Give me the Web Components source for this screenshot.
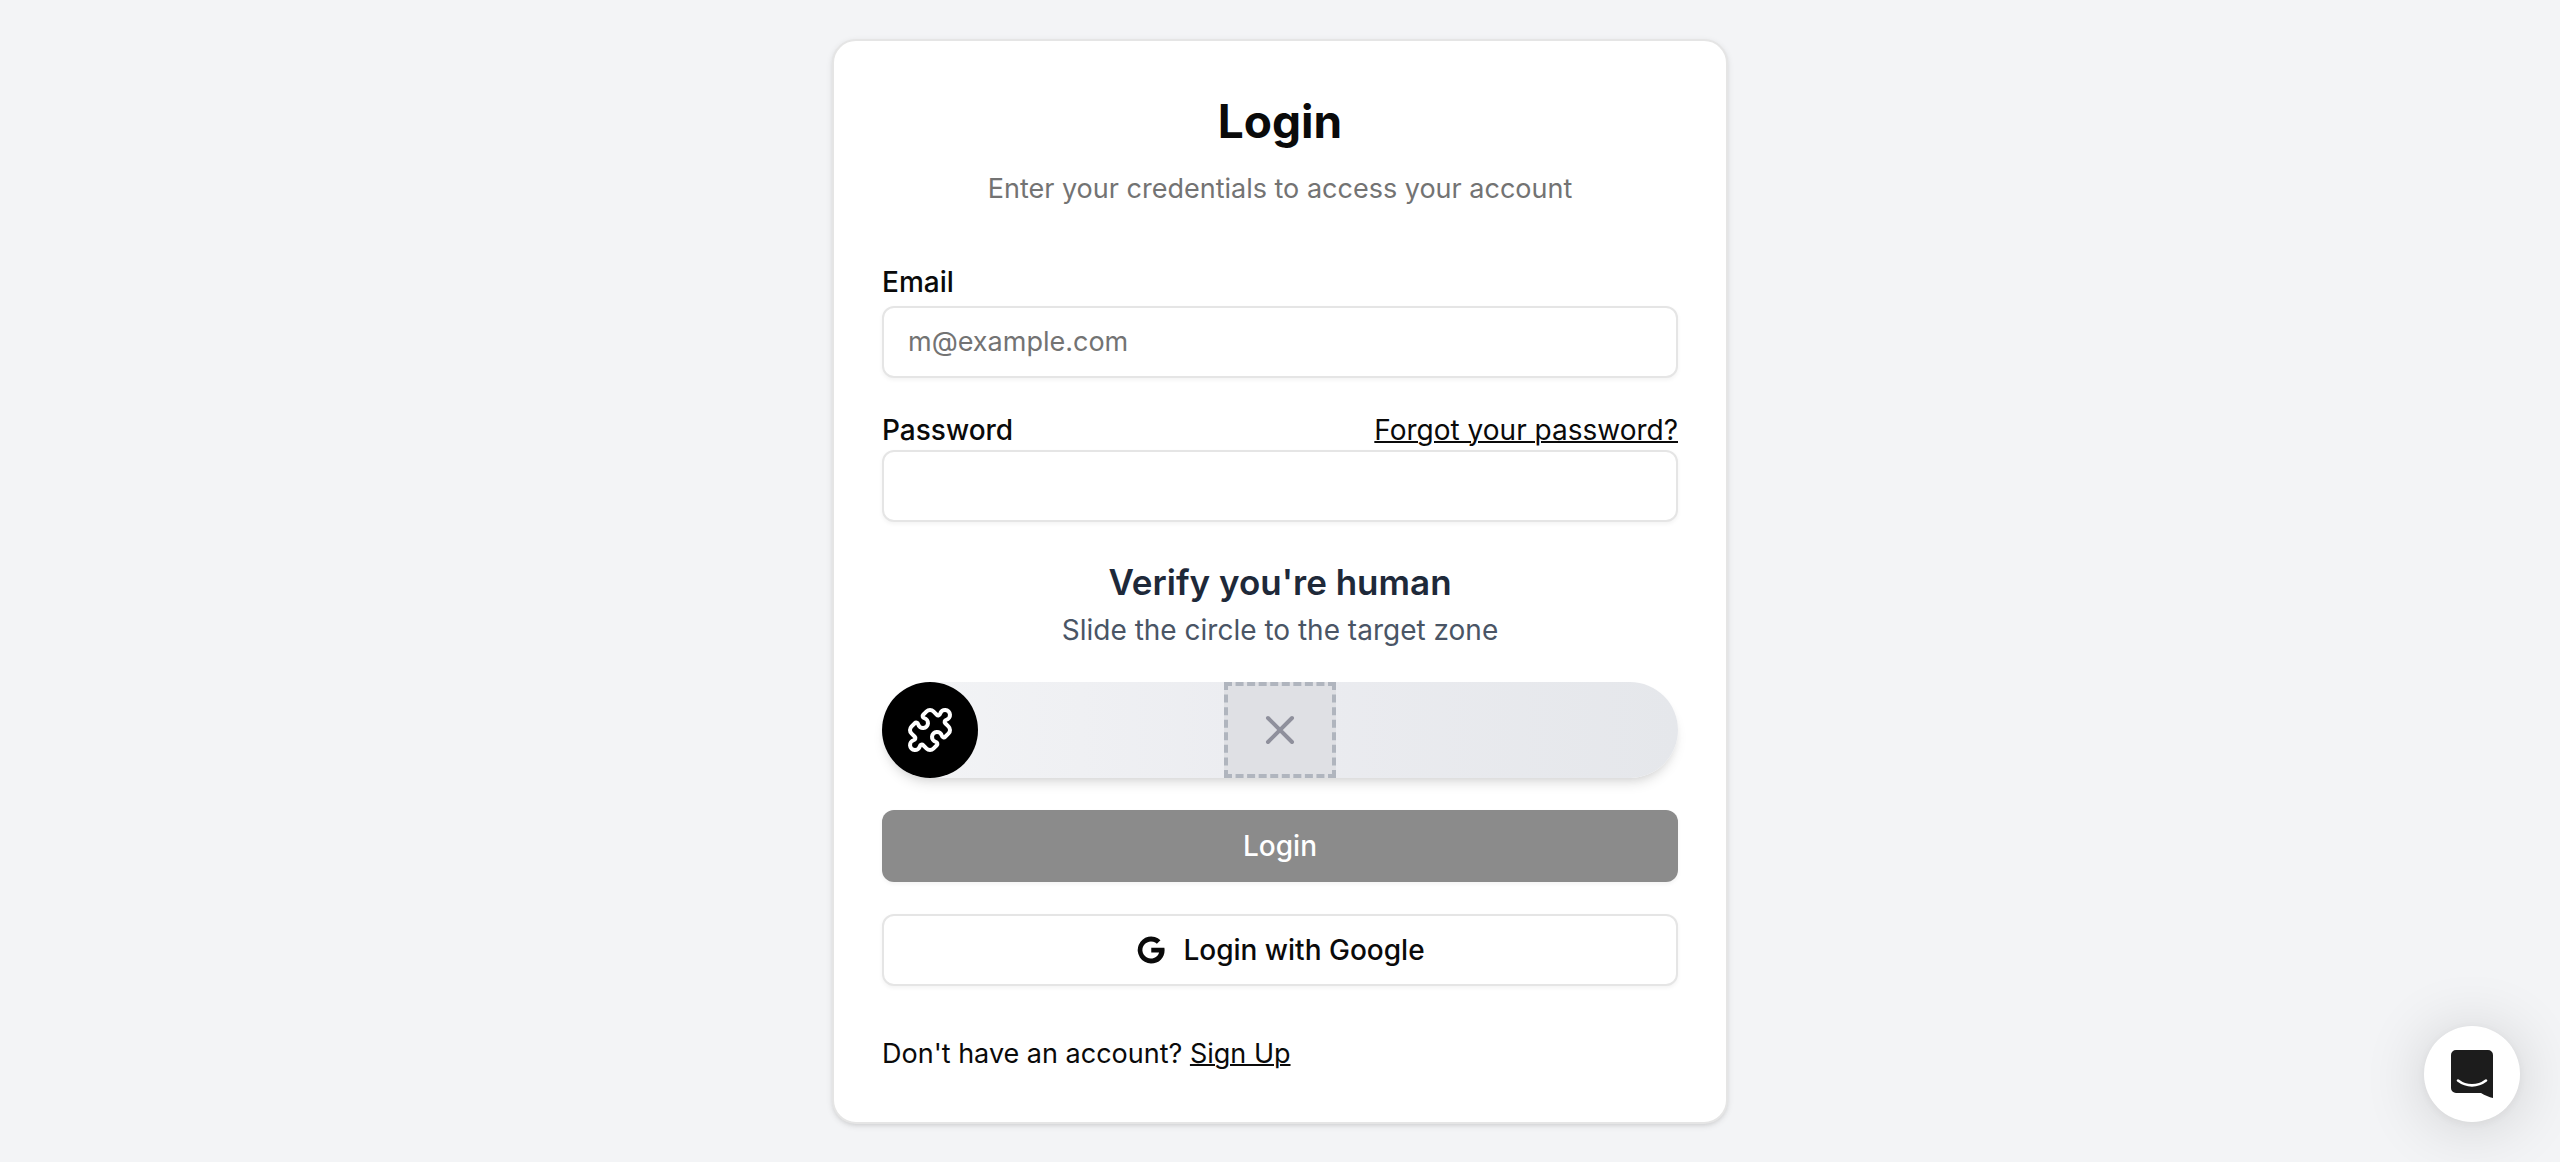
<!DOCTYPE html>
<html lang="en">
<head>
<meta charset="utf-8">
<title>Login</title>
<style>
  body { margin: 0; background: #f3f4f6; color: #0a0a0a; font-family: Inter, "Liberation Sans", sans-serif; font-size: 32px; line-height: 48px; }
</style>
</head>
<body>
<login-page></login-page>
<chat-launcher></chat-launcher>

<script>
const define = (name, html, setup) => customElements.define(name, class extends HTMLElement {
  constructor() {
    super();
    const t = document.createElement('template');
    t.innerHTML = `<style>*{box-sizing:border-box}</style>` + html;
    this.attachShadow({ mode: 'open' }).append(t.content.cloneNode(true));
    if (setup) setup(this, this.shadowRoot);
  }
});

define('text-field', `
<style>
  :host { display: block; }
  .row { display: flex; justify-content: space-between; }
  :host([compact]) .row { font-size: 28px; line-height: 40px; }
  label { font-size: 28px; font-weight: 500; }
  input { display: block; width: 100%; height: 72px; padding: 8px 24px; border: 2px solid #e5e5e5; border-radius: 12px;
    background: #fff; color: inherit; font: inherit; font-size: 27px; line-height: 40px; box-shadow: 0 2px 4px rgb(0 0 0 / .05); outline: none; }
  input:focus { border-color: #a3a3a3; }
  input::placeholder { color: #737373; opacity: 1; }
</style>
<div class="row"><div><label for="control"><slot></slot></label></div><slot name="hint"></slot></div>
<input id="control">`, (host, root) => {
  const input = root.querySelector('input');
  input.type = host.getAttribute('type') || 'text';
  input.placeholder = host.getAttribute('placeholder') || '';
});

define('text-link', `
<style>
  :host { display: inline; }
  a { color: inherit; text-decoration: underline; text-decoration-thickness: 2px; }
</style>
<a href="#"><slot></slot></a>`);

define('action-button', `
<style>
  :host { display: block; }
  button { display: flex; align-items: center; justify-content: center; gap: 16px; width: 100%; height: 72px; padding: 0 32px;
    border: 0; border-radius: 12px; background: #171717; color: #fafafa; font: inherit; font-size: 28px; font-weight: 500; line-height: 40px;
    box-shadow: 0 2px 4px rgb(0 0 0 / .1); }
  button:disabled { background: #8b8b8b; color: #fff; box-shadow: 0 2px 4px rgb(0 0 0 / .05); }
  :host([outline]) button { background: #fff; color: #0a0a0a; border: 2px solid #e5e5e5; box-shadow: 0 2px 4px rgb(0 0 0 / .05); }
</style>
<button type="button"><slot name="icon"></slot><slot></slot></button>`, (host, root) => {
  root.querySelector('button').disabled = host.hasAttribute('disabled');
});

define('slide-captcha', `
<style>
  :host { display: block; text-align: center; }
  h2 { margin: 0; font-size: 35px; line-height: 56px; font-weight: 600; color: #1e2939; }
  p { margin: 0 0 32px; font-size: 28px; line-height: 40px; color: #4a5565; }
  .track { display: grid; height: 96px; border-radius: 48px; background: linear-gradient(to right, #f3f4f6, #ebecf0 50%, #e5e7eb);
    box-shadow: 0 8px 12px -2px rgb(0 0 0 / .1), 0 4px 8px -4px rgb(0 0 0 / .1); }
  .track > * { grid-area: 1 / 1; }
  .target { justify-self: center; width: 112px; display: grid; place-items: center; border: 4px dashed #b0b5be; background: #dfe0e4; }
  .target svg { stroke: #8f909c; }
  svg { width: 48px; height: 48px; fill: none; stroke: #fff; stroke-width: 2; stroke-linecap: round; stroke-linejoin: round; }
  input { appearance: none; width: 100%; height: 96px; margin: 0; background: none; outline: none; border-radius: 48px; }
  input::-webkit-slider-thumb { appearance: none; width: 96px; height: 96px; border-radius: 50%; background: #000; cursor: grab; }
  .piece { place-self: center start; width: 96px; display: grid; place-items: center; pointer-events: none; }
</style>
<h2>Verify you're human</h2>
<p id="help">Slide the circle to the target zone</p>
<div class="track">
  <div class="target"><svg viewBox="0 0 24 24"><path d="M18 6 6 18M6 6l12 12"/></svg></div>
  <input type="range" min="0" max="100" value="0" aria-labelledby="help">
  <div class="piece"><svg viewBox="0 0 24 24"><path d="M15.39 4.39a1 1 0 0 0 1.68-.474 2.5 2.5 0 1 1 3.014 3.015 1 1 0 0 0-.474 1.68l1.683 1.682a2.414 2.414 0 0 1 0 3.414L19.61 15.39a1 1 0 0 1-1.68-.474 2.5 2.5 0 1 0-3.014 3.015 1 1 0 0 1 .474 1.68l-1.683 1.682a2.414 2.414 0 0 1-3.414 0L8.61 19.61a1 1 0 0 0-1.68.474 2.5 2.5 0 1 1-3.014-3.015 1 1 0 0 0 .474-1.68l-1.683-1.682a2.414 2.414 0 0 1 0-3.414L4.39 8.61a1 1 0 0 1 1.68.474 2.5 2.5 0 1 0 3.014-3.015 1 1 0 0 1-.474-1.68l1.683-1.682a2.414 2.414 0 0 1 3.414 0z"/></svg></div>
</div>`, (host, root) => {
  const piece = root.querySelector('.piece');
  root.querySelector('input').addEventListener('input', e => {
    piece.style.marginLeft = `calc((100% - 96px) * ${e.target.value / 100})`;
  });
});

define('login-card', `
<style>
  :host { display: block; width: 100%; max-width: 896px; padding: 48px; background: #fff; border: 2px solid #e5e5e5; border-radius: 24px;
    box-shadow: 0 2px 6px rgb(0 0 0 / .1), 0 2px 4px -2px rgb(0 0 0 / .1); box-sizing: border-box; }
  header { display: flex; flex-direction: column; gap: 16px; text-align: center; margin-bottom: 48px; }
  h1 { margin: 0; font-size: 46px; line-height: 64px; font-weight: 700; }
  p { margin: 0; font-size: 27px; line-height: 40px; color: #737373; }
  form { display: flex; flex-direction: column; gap: 32px; }
  footer { margin-top: 48px; font-size: 27px; line-height: 40px; }
</style>
<header><h1><slot name="title"></slot></h1><p><slot name="description"></slot></p></header>
<form><slot></slot></form>
<footer><slot name="footer"></slot></footer>`);

define('login-page', `
<style>
  :host { display: flex; align-items: center; justify-content: center; min-height: 100vh; }
  .google { display: block; width: 32px; height: 32px; fill: currentColor; }
</style>
<login-card>
  <span slot="title">Login</span>
  <span slot="description">Enter your credentials to access your account</span>
  <text-field type="email" placeholder="m@example.com">Email</text-field>
  <text-field type="password" compact>Password<text-link slot="hint">Forgot your password?</text-link></text-field>
  <slide-captcha></slide-captcha>
  <action-button disabled>Login</action-button>
  <action-button outline><svg slot="icon" class="google" viewBox="0 0 24 24"><path d="M12.200 10.400v3.500h5.900c-.8 2.700-3.100 4.500-6.100 4.500a6.400 6.400 0 1 1 4.400-11l2.700-2.700A10.100 10.100 0 1 0 12 22.100c6 0 10.200-4.200 10.200-10 0-.6-.1-1.200-.2-1.700z"/></svg>Login with Google</action-button>
  <span slot="footer">Don't have an account? <text-link>Sign Up</text-link></span>
</login-card>`);

define('chat-launcher', `
<style>
  :host { position: fixed; right: 40px; bottom: 40px; display: block; }
  button { display: grid; place-items: center; width: 96px; height: 96px; padding: 0; border: 0; border-radius: 50%; background: #fff;
    box-shadow: 0 2px 12px rgb(0 0 0 / .06), 0 4px 64px rgb(0 0 0 / .16); cursor: pointer; }
  svg { display: block; width: 42px; height: 48px; }
</style>
<button type="button" aria-label="Open chat"><svg viewBox="0 0 42 48"><path fill="#1c1c1c" d="M5 0h32a5 5 0 0 1 5 5v43c-4-1-8-2.500-12-5H5a5 5 0 0 1-5-5V5a5 5 0 0 1 5-5z"/><path d="M7 30.500c8.500 6.500 19.500 6.500 28 0" fill="none" stroke="#fff" stroke-width="2.600" stroke-linecap="round"/></svg></button>`);
</script>
</body>
</html>
